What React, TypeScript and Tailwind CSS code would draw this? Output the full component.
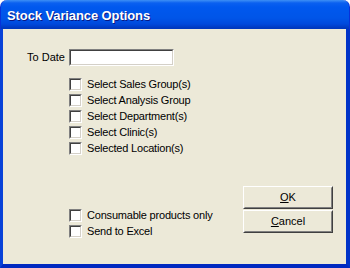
import React from "react";

const font = { fontFamily: '"Liberation Sans", Arial, sans-serif' };

function Check({ label }: { label: string }) {
  return (
    <div className="flex h-[16px] items-center">
      <div className="h-[13px] w-[13px] border border-t-[#808080] border-l-[#808080] border-b-white border-r-white">
        <div className="h-full w-full border border-t-[#404040] border-l-[#404040] border-b-[#d4d0c8] border-r-[#d4d0c8] bg-white" />
      </div>
      <span className="ml-[5px] text-[11px] leading-none tracking-[-0.2px] text-black">{label}</span>
    </div>
  );
}

function Btn({ children }: { children: React.ReactNode }) {
  return (
    <div className="h-[23px] w-[90px] border border-t-white border-l-white border-b-[#404040] border-r-[#404040]">
      <div className="flex h-full w-full items-center justify-center border border-t-[#ece9d8] border-l-[#ece9d8] border-b-[#808080] border-r-[#808080] bg-[#ece9d8] text-[11px] text-black">
        {children}
      </div>
    </div>
  );
}

export default function App() {
  return (
    <div className="flex h-[268px] w-[350px] flex-col bg-white" style={font}>
      <div className="flex h-[29px] items-center rounded-t-[7px] border-x border-x-[#0831d9] bg-[linear-gradient(to_bottom,#3d8ff5_0px,#0a60f0_3px,#0058ee_7px,#0055e8_18px,#0049dc_24px,#0038be_28px)] pl-[6px] pt-[2px]">
        <span className="text-[13px] font-bold tracking-[-0.1px] text-white [text-shadow:1px_1px_0_#0a1883]">
          Stock Variance Options
        </span>
      </div>
      <div className="flex flex-1 flex-col border-b-[4px] border-l-[3px] border-r-[4px] border-b-[#0029c0] border-l-[#0842d8] border-r-[#0033c8] bg-[#ece9d8]">
        <div className="mt-[20px] flex items-center">
          <div className="w-[62px] text-right text-[11px] text-black">To Date</div>
          <div className="ml-[4px] h-[17px] w-[105px] border border-t-[#808080] border-l-[#808080] border-b-white border-r-white">
            <div className="h-full w-full border border-t-[#404040] border-l-[#404040] border-b-[#d4d0c8] border-r-[#d4d0c8] bg-white" />
          </div>
        </div>
        <div className="ml-[66px] mt-[10px] flex flex-col">
          <Check label="Select Sales Group(s)" />
          <Check label="Select Analysis Group" />
          <Check label="Select Department(s)" />
          <Check label="Select Clinic(s)" />
          <Check label="Selected Location(s)" />
        </div>
        <div className="mt-[30px] flex">
          <div className="ml-[66px] flex w-[174px] flex-col pt-[21px]">
            <Check label="Consumable products only" />
            <Check label="Send to Excel" />
          </div>
          <div className="flex flex-col gap-[1px]">
            <Btn>
              <span className="underline">O</span>K
            </Btn>
            <Btn>
              <span className="underline">C</span>ancel
            </Btn>
          </div>
        </div>
      </div>
    </div>
  );
}
